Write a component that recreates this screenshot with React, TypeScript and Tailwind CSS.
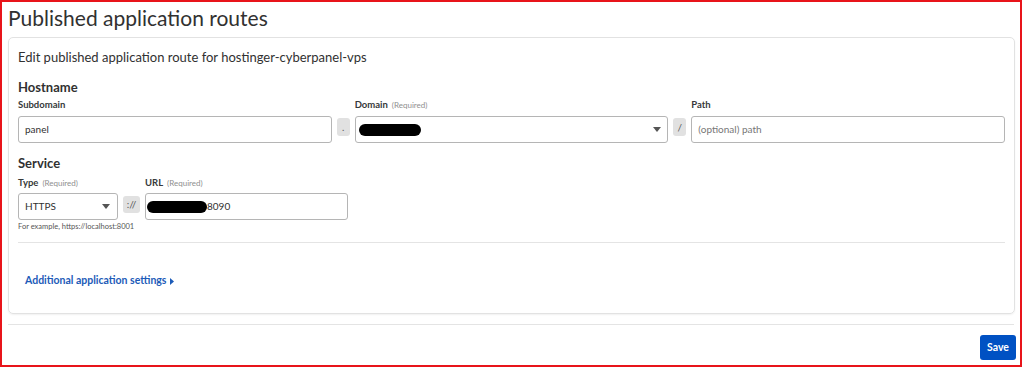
const Caret = () => (
  <svg width="8" height="5" viewBox="0 0 8 5" className="shrink-0">
    <path d="M0 0h8L4 5z" fill="#555" />
  </svg>
);

const Redacted = ({ w }: { w: number }) => (
  <span className="inline-block h-[12px] rounded-full bg-black" style={{ width: w }} />
);

const Label = ({ text, required }: { text: string; required?: boolean }) => (
  <div className="flex items-baseline gap-[4px] h-[14px] leading-[14px]">
    <span className="text-[9.5px] font-bold text-[#36393a]">{text}</span>
    {required && <span className="text-[8px] text-[#8f8f8f]">(Required)</span>}
  </div>
);

const Sep = ({ text, className }: { text: string; className?: string }) => (
  <div
    className={`shrink-0 flex items-center justify-center bg-[#e1e1e1] rounded-[3px] text-[10px] text-[#595959] ${className ?? ''}`}
  >
    {text}
  </div>
);

export default function App() {
  return (
    <div
      className="w-[1022px] h-[367px] border-2 border-[#e8141a] bg-white text-[#36393a] overflow-hidden"
      style={{ fontFamily: 'Lato, "Open Sans", sans-serif' }}
    >
      <h1 className="pl-[6px] h-[35px] text-[21px] leading-[31px] text-[#313131]">
        Published application routes
      </h1>

      <div className="ml-[6px] mr-[5px] h-[277px] border border-[#e2e2e2] rounded-[5px] shadow-[0_1px_2px_rgba(0,0,0,0.06)] px-[9px] pt-[10px]">
        <p className="text-[13px] leading-[18px] text-[#313131]">
          Edit published application route for hostinger-cyberpanel-vps
        </p>

        <h2 className="mt-[12px] text-[13px] font-bold leading-[18px] text-[#313131]">Hostname</h2>
        <div className="mt-[2px] flex items-end">
          <div className="flex-1">
            <Label text="Subdomain" />
            <div className="mt-[4px] h-[27px] border border-[#b5b5b5] rounded-[3px] flex items-center px-[6px] text-[10px] text-[#313131]">
              panel
            </div>
          </div>
          <Sep text="." className="w-[13px] h-[18px] mx-[5px] mb-[7px]" />
          <div className="flex-1">
            <Label text="Domain" required />
            <div className="mt-[4px] h-[27px] border border-[#b5b5b5] rounded-[3px] flex items-center justify-between pl-[3px] pr-[6px]">
              <Redacted w={62} />
              <Caret />
            </div>
          </div>
          <Sep text="/" className="w-[13px] h-[18px] mx-[5px] mb-[7px]" />
          <div className="flex-1">
            <Label text="Path" />
            <div className="mt-[4px] h-[27px] border border-[#b5b5b5] rounded-[3px] flex items-center px-[6px] text-[10px] text-[#777]">
              (optional) path
            </div>
          </div>
        </div>

        <h2 className="mt-[11px] text-[13px] font-bold leading-[18px] text-[#313131]">Service</h2>
        <div className="mt-[4px] flex items-end">
          <div className="w-[100px]">
            <Label text="Type" required />
            <div className="mt-[3px] h-[27px] border border-[#b5b5b5] rounded-[3px] flex items-center justify-between pl-[6px] pr-[7px] text-[10px] text-[#313131]">
              HTTPS
              <Caret />
            </div>
          </div>
          <Sep text="://" className="w-[17px] h-[17px] mx-[5px] mb-[7px]" />
          <div className="w-[203px]">
            <Label text="URL" required />
            <div className="mt-[3px] h-[27px] border border-[#b5b5b5] rounded-[3px] flex items-center pl-[1px] text-[10px] text-[#313131]">
              <Redacted w={60} />
              8090
            </div>
          </div>
        </div>
        <p className="mt-[2px] text-[7.5px] leading-[10px] text-[#555]">For example, https://localhost:8001</p>

        <div className="mt-[10px] border-t border-[#e4e4e4]" />

        <button className="mt-[31px] ml-[7px] h-[14px] flex items-center gap-[4px] text-[10.5px] font-bold text-[#1c5bb8]">
          Additional application settings
          <svg width="4" height="7" viewBox="0 0 4 7">
            <path d="M0 0l4 3.5L0 7z" fill="#1c5bb8" />
          </svg>
        </button>
      </div>

      <div className="mt-[10px] mx-[6px] border-t border-[#e4e4e4]" />
      <div className="flex justify-end pr-[4px] pt-[10px]">
        <button className="w-[36px] h-[25px] rounded-[3px] bg-[#0051c3] text-white text-[10.5px] font-bold">
          Save
        </button>
      </div>
    </div>
  );
}
